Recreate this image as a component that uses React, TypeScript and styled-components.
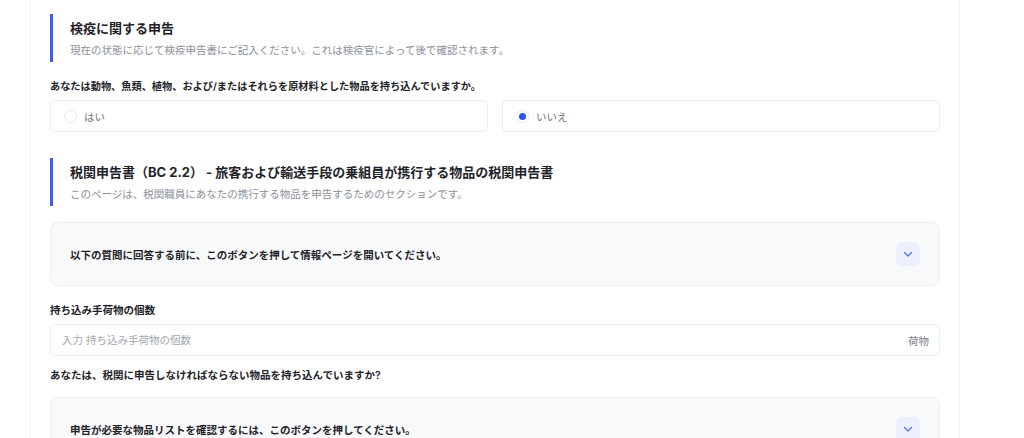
import React from 'react'
import styled, { createGlobalStyle } from 'styled-components'

const GlobalStyle = createGlobalStyle`
	html, body {
		margin: 0;
		padding: 0;
		background: #ffffff;
	}
	body {
		font-family: Inter, "Noto Sans CJK JP", sans-serif;
		color: #1f2329;
		-webkit-font-smoothing: antialiased;
	}
`

const Page = styled.div`
	width: 1024px;
	height: 438px;
	overflow: hidden;
`

const Card = styled.div`
	box-sizing: border-box;
	width: 930px;
	margin-left: 30px;
	min-height: 100%;
	padding: 14px 19px 40px 19px;
	border-left: 1px solid #f1f2f4;
	border-right: 1px solid #f1f2f4;
	background: #ffffff;
`

// Section heading with the blue accent bar on its left
const SectionHeader = styled.div<{ $gap: number }>`
	margin-top: ${p => p.$gap}px;
	border-left: 3px solid #3d5afe;
	padding: 4px 0 3px 17px;
`

const SectionTitle = styled.h2`
	margin: 0;
	font-size: 13px;
	line-height: 20px;
	font-weight: 700;
	color: #1f2329;
`

const SectionSub = styled.p`
	margin: 5px 0 0;
	font-size: 10.5px;
	line-height: 16px;
	color: #8b9099;
`

const Question = styled.div<{ $gap: number; $size?: number }>`
	margin-top: ${p => p.$gap}px;
	font-size: ${p => p.$size ?? 10.5}px;
	line-height: 16px;
	font-weight: 600;
	color: #1f2329;
`

const Options = styled.div`
	display: grid;
	grid-template-columns: 1fr 1fr;
	gap: 14px;
	margin-top: 6px;
`

const Option = styled.label`
	box-sizing: border-box;
	height: 32px;
	display: flex;
	align-items: center;
	gap: 7px;
	padding-left: 13px;
	border: 1px solid #eceef2;
	border-radius: 5px;
	font-size: 10.5px;
	color: #6f747c;
`

const Radio = styled.span<{ $checked: boolean }>`
	box-sizing: border-box;
	width: 13px;
	height: 13px;
	border-radius: 50%;
	border: 1px solid #e6e8ee;
	display: flex;
	align-items: center;
	justify-content: center;

	&::after {
		content: '';
		width: 7px;
		height: 7px;
		border-radius: 50%;
		background: ${p => (p.$checked ? '#3052f5' : 'transparent')};
	}
`

const Accordion = styled.div<{ $gap: number }>`
	box-sizing: border-box;
	margin-top: ${p => p.$gap}px;
	height: 64px;
	display: flex;
	align-items: center;
	justify-content: space-between;
	padding: 0 19px 0 19px;
	border: 1px solid #eceef2;
	border-radius: 8px;
	background: #f8f9fb;
`

const AccordionText = styled.span`
	font-size: 10.5px;
	font-weight: 700;
	color: #1f2329;
`

const ChevronButton = styled.button`
	width: 24px;
	height: 24px;
	padding: 0;
	border: none;
	border-radius: 6px;
	background: #eceffd;
	display: flex;
	align-items: center;
	justify-content: center;
`

const FieldLabel = styled.div`
	margin-top: 17px;
	font-size: 10.5px;
	line-height: 16px;
	font-weight: 600;
	color: #1f2329;
`

const InputBox = styled.div`
	box-sizing: border-box;
	margin-top: 5px;
	height: 32px;
	display: flex;
	align-items: center;
	padding: 0 10px 0 11px;
	border: 1px solid #eceef2;
	border-radius: 5px;
`

const Input = styled.input`
	flex: 1;
	border: none;
	outline: none;
	padding: 0;
	background: transparent;
	font-family: inherit;
	font-size: 10.5px;
	color: #1f2329;

	&::placeholder {
		color: #a3a7ae;
	}
`

const Suffix = styled.span`
	font-size: 10.5px;
	color: #7c8087;
`

function Chevron() {
	return (
		<svg width="12" height="12" viewBox="0 0 24 24" fill="none" stroke="#5b6cf2" strokeWidth="2.4" strokeLinecap="round" strokeLinejoin="round">
			<path d="M5 9l7 7 7-7" />
		</svg>
	)
}

export default function App() {
	const [answer, setAnswer] = React.useState<'yes' | 'no'>('no')

	return (
		<Page>
			<GlobalStyle />
			<Card>
				<SectionHeader $gap={0}>
					<SectionTitle>検疫に関する申告</SectionTitle>
					<SectionSub>現在の状態に応じて検疫申告書にご記入ください。これは検疫官によって後で確認されます。</SectionSub>
				</SectionHeader>

				<Question $gap={16} $size={10.2}>あなたは動物、魚類、植物、および/またはそれらを原材料とした物品を持ち込んでいますか。</Question>
				<Options>
					<Option onClick={() => setAnswer('yes')}>
						<Radio $checked={answer === 'yes'} />
						はい
					</Option>
					<Option onClick={() => setAnswer('no')}>
						<Radio $checked={answer === 'no'} />
						いいえ
					</Option>
				</Options>

				<SectionHeader $gap={26}>
					<SectionTitle>税関申告書（BC 2.2） - 旅客および輸送手段の乗組員が携行する物品の税関申告書</SectionTitle>
					<SectionSub>このページは、税関職員にあなたの携行する物品を申告するためのセクションです。</SectionSub>
				</SectionHeader>

				<Accordion $gap={16}>
					<AccordionText>以下の質問に回答する前に、このボタンを押して情報ページを開いてください。</AccordionText>
					<ChevronButton><Chevron /></ChevronButton>
				</Accordion>

				<FieldLabel>持ち込み手荷物の個数</FieldLabel>
				<InputBox>
					<Input placeholder="入力 持ち込み手荷物の個数" />
					<Suffix>荷物</Suffix>
				</InputBox>

				<Question $gap={12}>あなたは、税関に申告しなければならない物品を持ち込んでいますか?</Question>

				<Accordion $gap={13}>
					<AccordionText>申告が必要な物品リストを確認するには、このボタンを押してください。</AccordionText>
					<ChevronButton><Chevron /></ChevronButton>
				</Accordion>
			</Card>
		</Page>
	)
}
